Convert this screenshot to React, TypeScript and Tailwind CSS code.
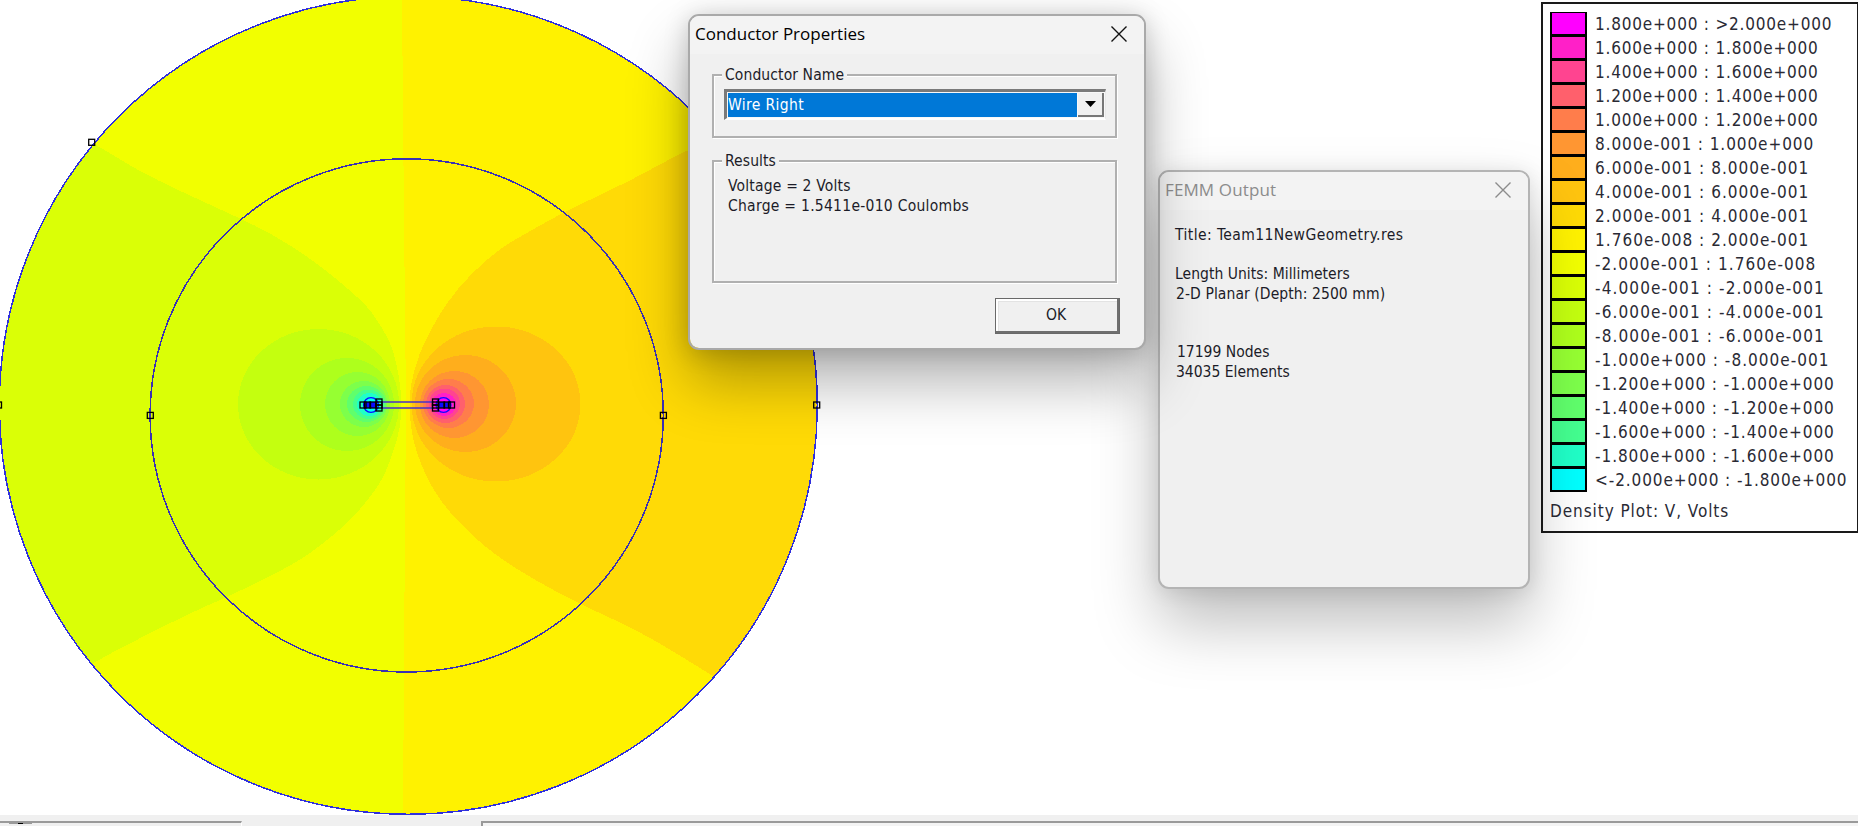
import type { ReactNode } from "react";

type Band = { box: [number, number, number, number]; color: string };
type Point = [number, number];

const negativeBands: Band[] = [
  { box: [238, 399, 329, 479.5], color: "#c4ff0f" },
  { box: [300, 394, 358, 451], color: "#aeff1c" },
  { box: [325, 390, 372, 436], color: "#96ff32" },
  { box: [340, 387.5, 381, 427], color: "#7dff4b" },
  { box: [347, 386, 386, 422], color: "#60ff6c" },
  { box: [353, 384, 389.5, 419], color: "#44ff90" },
  { box: [357, 382, 393, 416], color: "#20ffc8" },
  { box: [363, 379, 397, 412.5], color: "#00ffff" },
];

const positiveBands: Band[] = [
  { box: [411.5, 580.5, 326.5, 481.5], color: "#ffc40f" },
  { box: [415, 516, 355, 452], color: "#ffae1c" },
  { box: [420, 489, 371, 438], color: "#ff9632" },
  { box: [423, 474, 379, 428], color: "#ff7d4b" },
  { box: [426, 465, 385, 423], color: "#ff606c" },
  { box: [429, 460, 388.5, 419], color: "#ff4490" },
  { box: [432, 456, 393, 416], color: "#ff20c8" },
  { box: [435, 451, 397, 412.5], color: "#ff00ff" },
];

const negativeLobe: Point[] = [
  [0, 92], [92, 142], [137, 170], [180, 191], [237, 217], [270, 233], [310, 258], [345, 286],
  [368, 307], [381, 326], [392, 346], [399, 375], [402, 404], [400, 428], [394, 450], [383, 479],
  [367, 501], [348, 523], [310, 554], [277, 573], [227, 597], [197, 610], [148, 634], [92, 663], [0, 720],
];

const positiveLobe: Point[] = [
  [822, 88], [690, 148], [630, 181], [568, 210], [530, 231], [499, 249], [469, 276], [448, 301],
  [431, 329], [419, 354], [411, 383], [409, 405], [412, 437], [422, 468], [438, 498], [462, 526],
  [496, 556], [540, 583], [580, 604], [645, 634], [713, 676], [822, 745],
];

function smoothPath(points: Point[]) {
  const curve = points.slice(1, -1).map(([x, y], i) => {
    const [nx, ny] = points[i + 2];
    return `Q${x} ${y} ${(x + nx) / 2} ${(y + ny) / 2}`;
  });
  const last = points[points.length - 1];
  return `M${points[0].join(" ")} ${curve.join(" ")} L${last.join(" ")}Z`;
}

const legendRows = [
  { swatch: "bg-[#ff00ff]", tracking: "tracking-[0.8px]", text: "1.800e+000 : >2.000e+000" },
  { swatch: "bg-[#ff20c8]", tracking: "tracking-[0.8px]", text: "1.600e+000 : 1.800e+000" },
  { swatch: "bg-[#ff4490]", tracking: "tracking-[0.8px]", text: "1.400e+000 : 1.600e+000" },
  { swatch: "bg-[#ff606c]", tracking: "tracking-[0.8px]", text: "1.200e+000 : 1.400e+000" },
  { swatch: "bg-[#ff7d4b]", tracking: "tracking-[0.8px]", text: "1.000e+000 : 1.200e+000" },
  { swatch: "bg-[#ff9632]", tracking: "tracking-[0.92px]", text: "8.000e-001 : 1.000e+000" },
  { swatch: "bg-[#ffae1c]", tracking: "tracking-[1.03px]", text: "6.000e-001 : 8.000e-001" },
  { swatch: "bg-[#ffc40f]", tracking: "tracking-[1.03px]", text: "4.000e-001 : 6.000e-001" },
  { swatch: "bg-[#ffda06]", tracking: "tracking-[1.03px]", text: "2.000e-001 : 4.000e-001" },
  { swatch: "bg-[#fff200]", tracking: "tracking-[1.03px]", text: "1.760e-008 : 2.000e-001" },
  { swatch: "bg-[#f2ff00]", tracking: "tracking-[1.05px]", text: "-2.000e-001 : 1.760e-008" },
  { swatch: "bg-[#daff06]", tracking: "tracking-[1.13px]", text: "-4.000e-001 : -2.000e-001" },
  { swatch: "bg-[#c4ff0f]", tracking: "tracking-[1.13px]", text: "-6.000e-001 : -4.000e-001" },
  { swatch: "bg-[#aeff1c]", tracking: "tracking-[1.13px]", text: "-8.000e-001 : -6.000e-001" },
  { swatch: "bg-[#96ff32]", tracking: "tracking-[1.02px]", text: "-1.000e+000 : -8.000e-001" },
  { swatch: "bg-[#7dff4b]", tracking: "tracking-[0.94px]", text: "-1.200e+000 : -1.000e+000" },
  { swatch: "bg-[#60ff6c]", tracking: "tracking-[0.94px]", text: "-1.400e+000 : -1.200e+000" },
  { swatch: "bg-[#44ff90]", tracking: "tracking-[0.94px]", text: "-1.600e+000 : -1.400e+000" },
  { swatch: "bg-[#20ffc8]", tracking: "tracking-[0.94px]", text: "-1.800e+000 : -1.600e+000" },
  { swatch: "bg-[#00ffff]", tracking: "tracking-[0.9px]", text: "<-2.000e+000 : -1.800e+000" },
];

function Bands({ bands }: { bands: Band[] }) {
  return (
    <>
      {bands.map(({ box: [left, right, top, bottom], color }) => (
        <ellipse
          key={color}
          cx={(left + right) / 2}
          cy={(top + bottom) / 2}
          rx={(right - left) / 2}
          ry={(bottom - top) / 2}
          fill={color}
        />
      ))}
    </>
  );
}

function Node({ x, y }: { x: number; y: number }) {
  return <rect x={x - 3} y={y - 3} width="6" height="6" fill="none" stroke="#000" strokeWidth="1.3" />;
}

function Wire({ x, dir }: { x: number; dir: 1 | -1 }) {
  return (
    <g>
      <circle cx={x} cy={405} r="7.4" fill="none" stroke="#0a0aff" strokeWidth="1.4" />
      <rect x={x - 6} y={402} width="12" height="6" fill="#0a0aff" />
      <Node x={x - 8 * dir} y={405} />
      <Node x={x - 3.5 * dir} y={405} />
      <Node x={x + 2 * dir} y={405} />
      <Node x={x + 8 * dir} y={402} />
      <Node x={x + 8 * dir} y={405} />
      <Node x={x + 8 * dir} y={408} />
    </g>
  );
}

function DensityPlot() {
  return (
    <svg className="block h-[815px] w-[822px] shrink-0" viewBox="0 0 822 815">
      <defs>
        <clipPath id="domain">
          <circle cx="408.3" cy="405.3" r="409" />
        </clipPath>
      </defs>
      <g clipPath="url(#domain)" shapeRendering="crispEdges">
        <rect width="822" height="815" fill="#f2ff00" />
        <path d="M402 0 L404 220 L406 404 L405 520 L403 815 H822 V0Z" fill="#fff200" />
        <path d={smoothPath(negativeLobe)} fill="#daff06" />
        <path d={smoothPath(positiveLobe)} fill="#ffda06" />
        <Bands bands={negativeBands} />
        <Bands bands={positiveBands} />
      </g>
      <g fill="none" strokeWidth="1.5" shapeRendering="crispEdges">
        <circle cx="408.3" cy="405.3" r="409" stroke="#3030dc" />
        <circle cx="406.7" cy="415.4" r="256.6" stroke="#3a30b4" />
      </g>
      <path d="M381 402H434M381 408H434" stroke="#4a30c8" strokeWidth="1.6" />
      <Wire x={371} dir={1} />
      <Wire x={443.5} dir={-1} />
      <Node x={91.7} y={142.3} />
      <Node x={-1.5} y={405} />
      <Node x={816.7} y={405} />
      <Node x={150.3} y={415.4} />
      <Node x={663.4} y={415.4} />
    </svg>
  );
}

function TitleBar({ title, active }: { title: string; active: boolean }) {
  return (
    <div className="flex h-[38px] items-center justify-between bg-[#f3f3f3] pr-4 pb-[3px] pl-[5px]">
      <span
        className={
          active
            ? "font-['Open_Sans',sans-serif] text-[17px] tracking-[-0.01px] whitespace-nowrap text-black"
            : "font-['Open_Sans',sans-serif] text-[17px] tracking-[0.12px] whitespace-nowrap text-[#8c8c8c]"
        }
      >
        {title}
      </span>
      <svg className="size-[18px]" viewBox="0 0 18 18">
        <path d="M1.5 1.5 16.5 16.5M16.5 1.5 1.5 16.5" stroke={active ? "#111" : "#8c8c8c"} strokeWidth="1.4" />
      </svg>
    </div>
  );
}

function GroupBox({ label, className, children }: { label: string; className: string; children: ReactNode }) {
  return (
    <fieldset
      className={`min-w-0 border-2 border-[#b0b0b0] shadow-[1px_1px_0_#fff,inset_1px_1px_0_#fff] ${className}`}
    >
      <legend className="ml-[8px] bg-[#f0f0f0] px-[3px] leading-5">{label}</legend>
      {children}
    </fieldset>
  );
}

function ConductorDialog() {
  return (
    <section className="absolute top-[14px] left-[688px] flex h-[336px] w-[458px] flex-col overflow-hidden rounded-[11px] border-2 border-[#a9a9a9] bg-[#f0f0f0] bg-clip-padding font-['DejaVu_Sans_Condensed','DejaVu_Sans',sans-serif] text-[15.5px] text-[#1c1c28] shadow-[0_32px_60px_rgba(0,0,0,0.3),0_2px_24px_rgba(0,0,0,0.18)]">
      <TitleBar title="Conductor Properties" active />
      <div className="flex flex-1 flex-col pt-[11px] pr-[27px] pl-[22px]">
        <GroupBox label="Conductor Name" className="h-[73px] w-[405px] tracking-[0.1px]">
          <div className="mt-[4px] ml-[10px] flex h-[31px] w-[382px] border-t-[3px] border-r border-b-2 border-l-[3px] border-t-[#7a7a7a] border-r-[#e8e8e8] border-b-white border-l-[#7a7a7a] bg-[#f8f8f8] p-px">
            <div className="flex flex-1 items-center bg-[#0078d7] pt-px tracking-[0.35px] text-white">Wire Right</div>
            <div className="ml-px flex w-[26px] items-center justify-center border-r-2 border-b-2 border-[#777] bg-[#f0f0f0]">
              <svg className="h-[6px] w-[11px]" viewBox="0 0 11 6">
                <path d="M0 0H11L5.5 6Z" fill="#000" />
              </svg>
            </div>
          </div>
        </GroupBox>
        <GroupBox label="Results" className="mt-[13px] h-[132px] w-[405px] tracking-[0.1px]">
          <div className="mt-[6px] ml-[14px] leading-[19.5px] whitespace-nowrap">
            <p className="tracking-[0.19px]">Voltage = 2 Volts</p>
            <p className="tracking-[0.27px]">Charge = 1.5411e-010 Coulombs</p>
          </div>
        </GroupBox>
        <button className="mt-[15px] -mr-[3px] h-9 w-[125px] self-end border border-[#696969] bg-[#f0f0f0] pr-[3px] shadow-[inset_-2px_-2px_0_#6f6f6f,inset_2px_2px_0_#fff,inset_3px_3px_0_#e3e3e3]">
          OK
        </button>
      </div>
    </section>
  );
}

function OutputWindow() {
  return (
    <section className="absolute top-[170px] left-[1158px] flex h-[419px] w-[372px] flex-col overflow-hidden rounded-[11px] border-2 border-[#b4b4b4] bg-[#f0f0f0] bg-clip-padding font-['DejaVu_Sans_Condensed','DejaVu_Sans',sans-serif] text-[15.5px] leading-[19.5px] whitespace-pre text-[#1c1c28] shadow-[0_34px_64px_rgba(0,0,0,0.26),0_2px_20px_rgba(0,0,0,0.1)]">
      <TitleBar title="FEMM Output" active={false} />
      <div className="pt-4 pl-[15px]">
        <p className="tracking-[0.42px]">Title: Team11NewGeometry.res</p>
        <p className="mt-[19.5px] tracking-[0.03px]">Length Units: Millimeters</p>
        <p className="pl-px tracking-[0.08px]">2-D Planar (Depth: 2500 mm)</p>
        <p className="mt-[39px] pl-[2px]">17199 Nodes</p>
        <p className="pl-px">34035 Elements</p>
      </div>
    </section>
  );
}

function Legend() {
  return (
    <aside className="mt-[2px] flex h-[531px] w-[317px] flex-col border-2 border-r border-[#1a1a1a] bg-white pt-[8px] pl-[7px] font-['DejaVu_Sans_Condensed','DejaVu_Sans',sans-serif] text-[17px] whitespace-nowrap text-[#2a2a34]">
      {legendRows.map(({ swatch, tracking, text }) => (
        <div key={text} className="flex h-6 items-center gap-2">
          <div className={`h-6 w-[37px] border-2 border-t border-black ${swatch}`} />
          <span className={`leading-6 ${tracking}`}>{text}</span>
        </div>
      ))}
      <p className="mt-[7px] leading-6 tracking-[0.93px]">Density Plot: V, Volts</p>
    </aside>
  );
}

export default function App() {
  return (
    <main className="relative flex h-[826px] w-[1858px] flex-col overflow-hidden bg-white">
      <div className="flex h-[815px] items-start justify-between">
        <DensityPlot />
        <Legend />
      </div>
      <footer className="flex h-[11px] items-end justify-between bg-[#f0f0f0]">
        <div className="flex h-[5px] w-[242px] flex-col justify-between border-t-2 border-r border-t-[#9a9a9a] border-r-white">
          <div className="ml-[9px] flex h-px w-[23px] justify-center bg-[#999]">
            <div className="h-px w-[5px] bg-black" />
          </div>
        </div>
        <div className="h-[5px] w-[1377px] border-t-2 border-l-2 border-[#9a9a9a] bg-[#f4f4f4]" />
      </footer>
      <OutputWindow />
      <ConductorDialog />
    </main>
  );
}
